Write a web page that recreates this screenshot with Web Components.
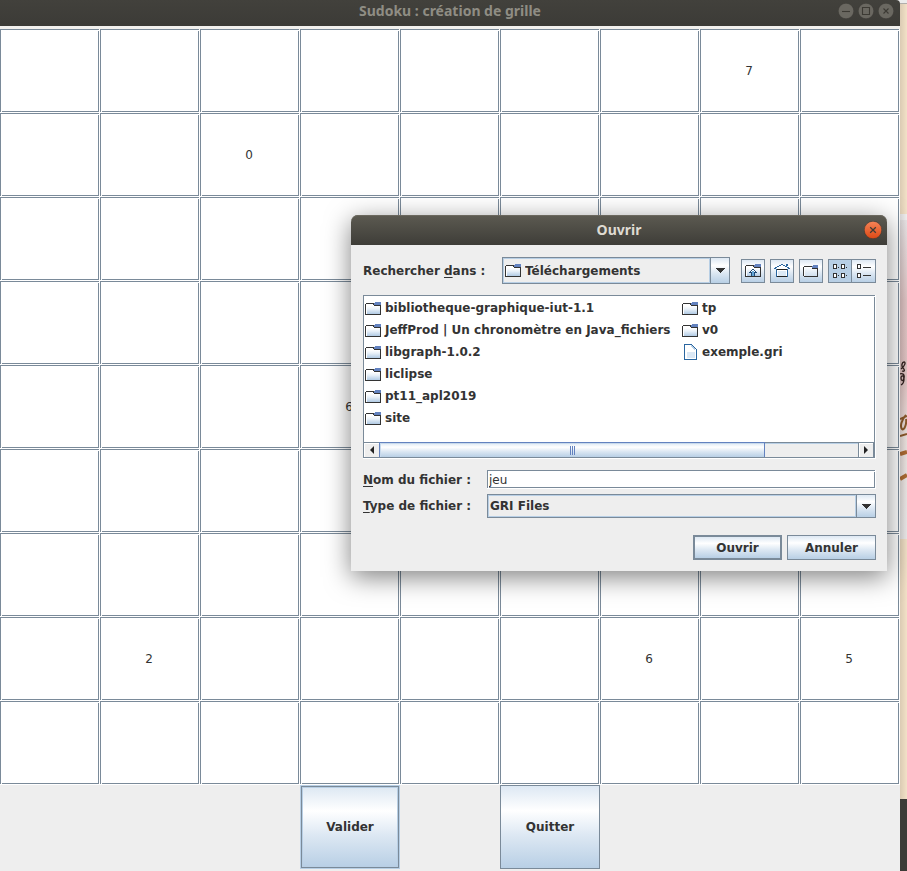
<!DOCTYPE html>
<html lang="fr">
<head>
<meta charset="utf-8">
<title>Sudoku : création de grille</title>
<style>
  html { height: 100%; }
  body {
    margin: 0; min-height: 100vh; display: grid; position: relative;
    font: 12px/16px "DejaVu Sans", sans-serif; color: #333; background: #eee;
    --line: #7a8a99; --focus: #b8cfe5; --face: #eee;
    --metal: linear-gradient(#dde8f3, #fff 30%, #dde8f3 60%, #b8cfe5);
    --etched:
      linear-gradient(#7a8a99, #7a8a99) left 0 top 0 / calc(100% - 1px) 1px no-repeat,
      linear-gradient(#7a8a99, #7a8a99) left 0 top 0 / 1px calc(100% - 1px) no-repeat,
      linear-gradient(#7a8a99, #7a8a99) right 1px top 2px / 1px calc(100% - 3px) no-repeat,
      linear-gradient(#7a8a99, #7a8a99) left 2px bottom 1px / calc(100% - 3px) 1px no-repeat,
      #fff;
  }
</style>
</head>
<body>
<sudoku-desktop>
  <sudoku-window heading="Sudoku : création de grille"></sudoku-window>
  <file-dialog heading="Ouvrir"></file-dialog>
</sudoku-desktop>

<script>
const define = (name, html, setup) => customElements.define(name, class extends HTMLElement {
  constructor() {
    super();
    const t = document.createElement('template');
    t.innerHTML = html;
    this.attachShadow({ mode: 'open' }).append(t.content.cloneNode(true));
  }
  connectedCallback() {
    if (setup && !this.ready) { this.ready = true; setup(this, this.shadowRoot); }
  }
});

const FOLDER = `<defs><linearGradient id="f" x1="0" y1="0" x2="0" y2="1"><stop offset="0" stop-color="#fff"/><stop offset=".4" stop-color="#e8f0f8"/><stop offset="1" stop-color="#b0cae4"/></linearGradient></defs>
  <path fill="#fff" d="M1 2h14v10H1z"/><path fill="url(#f)" d="M2 4h13v8H2z"/>
  <path fill="#333" d="M1 1h8v1H1zM0 2h1v11H0zM1 12h15v1H1zM15 3h1v10h-1zM8 2h1v1H8zM9 3h6v1H9z"/>
  <path fill="#6382bf" d="M10 0h6v3H9V1h1z"/>`;
const ICONS = {
  folder: `<svg width="16" height="13" viewBox="0 0 16 13" shape-rendering="crispEdges">${FOLDER}</svg>`,
  file: `<svg width="16" height="16" viewBox="0 0 16 16" shape-rendering="crispEdges"><path fill="#fff" d="M3 1h7l4 4v10H3z"/><path fill="#dbe8f5" d="M4 8h9v6H4z"/><path fill="#fff" d="M4 2h1v12H4z"/><path fill="#2a66a0" d="M2 0h8v1H2zM2 0h1v16H2zM2 15h13v1H2zM14 5h1v11h-1zM10 1h1v1h-1zM11 2h1v1h-1zM12 3h1v1h-1zM13 4h1v1h-1z"/><path fill="#b8cfe5" d="M9 1h1v2H9zM10 2h1v2h-1zM11 3h1v2h-1zM12 4h1v2h-1z"/></svg>`,
  up: `<svg width="16" height="13" viewBox="0 0 16 13" shape-rendering="crispEdges">${FOLDER}<path fill="#fff" d="M7 6h2v1h1v1h1v1h-1v3H6V9H5V8h1V7h1z"/><path fill="#1f4a75" d="M7 5h2v1H7zM6 6h1v1H6zM9 6h1v1H9zM5 7h1v1H5zM10 7h1v1h-1zM4 8h3v1H4zM9 8h3v1H9zM6 9h1v3H6zM9 9h1v3H9z"/><path fill="#63a5d6" d="M7 7h2v5H7z"/></svg>`,
  home: `<svg width="16" height="14" viewBox="0 0 16 14" shape-rendering="crispEdges"><path fill="#fff" d="M3 3h10v9H3zM5 2h6v1H5zM7 1h2v1H7z"/><path fill="#dce9f5" d="M4 7h8v5H4z"/><path fill="#2a66a0" d="M7 0h2v1H7zM5 1h2v1H5zM9 1h2v1H9zM3 2h2v1H3zM11 2h2v1h-2zM1 3h2v1H1zM13 3h2v1h-2zM0 4h2v1H0zM14 4h2v1h-2zM2 5h1v8H2zM13 5h1v8h-1zM12 0h2v2h-2z"/><path fill="#222" d="M3 5h10v1H3zM3 12h10v1H3z"/></svg>`,
  newFolder: `<svg width="16" height="13" viewBox="0 0 16 13" shape-rendering="crispEdges"><path fill="#fff" d="M1 3h14v1H1zM1 3h1v9H1z" opacity=".8"/><path fill="#333" d="M1 2h8v1H1zM0 3h1v9H0zM1 12h14v1H1zM14 4h1v8h-1zM9 4h6v1H9z"/><path fill="#6382bf" d="M10 1h5v3H9V2h1z"/></svg>`,
  list: `<svg width="16" height="16" viewBox="0 0 16 16" shape-rendering="crispEdges"><path fill="#fff" d="M2 2h2v4H2zM10 2h2v4h-2zM2 11h2v4H2zM10 11h2v4h-2z"/><path fill="none" stroke="#333" d="M1.500 1.500h3v4h-3zM9.500 1.500h3v4h-3zM1.500 10.500h3v4h-3zM9.500 10.500h3v4h-3z"/><path fill="#333" d="M6 4h1v1H6zM14 4h1v1h-1zM6 12h1v1H6zM14 12h1v1h-1z"/></svg>`,
  details: `<svg width="16" height="16" viewBox="0 0 16 16" shape-rendering="crispEdges"><path fill="#fff" d="M2 2h2v4H2zM2 11h2v4H2z"/><path fill="none" stroke="#333" d="M1.500 1.500h3v4h-3zM1.500 10.500h3v4h-3z"/><path fill="#333" d="M7 4h8v1H7zM7 12h8v1H7z"/></svg>`
};

/* Window title bar; "active" selects the lighter colouring. */
define('title-bar', `
<style>
  :host { display: grid; grid-template-columns: 1fr auto 1fr; align-items: center; height: 26px; box-sizing: border-box;
    color: #8f8d84; background: linear-gradient(#42413c, #3c3b37); border-top-right-radius: 4px;
    font: 700 14px/20px "Noto Sans", "Open Sans", sans-serif; padding: 0 6px 4px; }
  :host([active]) { height: 30px; color: #dfdbd2; background: linear-gradient(#5c5a51, #3e3d38); padding: 0 5px;
    border-radius: 7px 7px 0 0; box-shadow: inset 0 1px #6b685e; }
  h1 { font: inherit; margin: 0; grid-column: 2; }
  nav { display: flex; gap: 4px; justify-content: flex-end; }
  button { border: 0; padding: 0; background: none; width: 16px; height: 16px; display: block; }
  :host([active]) button { width: 18px; height: 18px; }
  svg { display: block; width: 100%; height: 100%; }
</style>
<h1><slot></slot></h1><nav></nav>`, (el, root) => {
  const nav = root.querySelector('nav');
  const cross = 'M5.500 5.500l5 5M10.500 5.500l-5 5';
  const all = el.hasAttribute('active') ? [['Fermer', cross]]
    : [['Réduire', 'M4 8.500h8'], ['Agrandir', 'M4.500 4.500h7v7h-7z'], ['Fermer', cross]];
  const fill = el.hasAttribute('active') ? 'url(#g)' : '#6a6861';
  nav.innerHTML = all.map(([n, d]) => `<button aria-label="${n}"><svg viewBox="0 0 16 16">
    <defs><linearGradient id="g" x1="0" y1="0" x2="0" y2="1"><stop offset="0" stop-color="#f58458"/><stop offset="1" stop-color="#dd4814"/></linearGradient></defs>
    <circle cx="8" cy="8" r="7.800" fill="${fill}" stroke="#383632" stroke-width=".5"/>
    <path d="${d}" fill="none" stroke="#3c3a34" stroke-width="1.100"/></svg></button>`).join('');
});

define('metal-button', `
<style>
  :host { display: grid; }
  button { font: 700 12px/16px "DejaVu Sans", sans-serif; color: #333; border: 1px solid var(--line);
    background: var(--metal); padding: 0; margin: 0; display: grid; place-items: center; min-width: 0; }
  :host([default]) button { border-width: 2px; }
  :host([focused]) button { border-color: var(--line); margin: 1px; outline: 1px solid var(--focus); box-shadow: inset 0 0 0 1px var(--focus); }
  :host([pressed]) button { background: var(--focus); }
</style>
<button part="button"><slot></slot></button>`, (el, root) => {
  const b = root.querySelector('button');
  if (el.hasAttribute('label')) b.setAttribute('aria-label', el.getAttribute('label'));
  const icon = el.getAttribute('icon');
  if (icon) b.innerHTML = ICONS[icon];
});

define('sudoku-cell', `
<style>
  :host { display: grid; }
  input { font: 12px/16px "DejaVu Sans", sans-serif; color: #333; text-align: center; border: 0; margin: 0;
    padding: 0 2px 0 0; min-width: 0; width: 100%; box-sizing: border-box; border-radius: 0; background: var(--etched); outline: 0; }
</style>
<input type="text" maxlength="1">`, (el, root) => {
  const i = root.querySelector('input');
  i.value = el.getAttribute('value') || '';
  i.setAttribute('aria-label', el.getAttribute('label'));
});

define('sudoku-window', `
<style>
  :host { display: flex; flex-direction: column; gap: 3px; background: linear-gradient(#f2f1ee, #f2f1ee) 0 26px / 100% 3px no-repeat, var(--face); }
  main { flex: 1; display: grid; grid-template-columns: repeat(9, 1fr); grid-template-rows: repeat(10, 1fr); padding-bottom: 2px; }
  .ok { grid-area: 10 / 4; } .quit { grid-area: 10 / 6; }
</style>
<title-bar></title-bar>
<main></main>`, (el, root) => {
  root.querySelector('title-bar').textContent = el.getAttribute('heading');
  const given = { '1,8': 7, '2,3': 0, '5,4': 6, '8,2': 2, '8,7': 6, '8,9': 5 };
  let html = '';
  for (let r = 1; r < 10; r++) for (let c = 1; c < 10; c++)
    html += `<sudoku-cell label="Ligne ${r}, colonne ${c}" value="${given[r + ',' + c] ?? ''}"></sudoku-cell>`;
  root.querySelector('main').innerHTML = html +
    '<metal-button class="ok" focused>Valider</metal-button><metal-button class="quit">Quitter</metal-button>';
});

define('metal-combo', `
<style>
  :host { display: grid; grid-template-columns: var(--label-width) 1fr; align-items: center; }
  label { font-weight: 700; }
  .box { display: flex; align-items: center; border: 1px solid var(--line); height: 22px; }
  :host([tall]) .box { height: 25px; }
  .value { flex: 1; align-self: stretch; display: flex; align-items: center; gap: 4px; padding: 0 1px; border: 1px solid var(--focus); min-width: 0; }
  .value svg { flex: none; }
  select { appearance: none; flex: 1; min-width: 0; border: 0; padding: 0; margin: 0; background: none; color: #333; outline: 0;
    font: 700 12px/16px "DejaVu Sans", sans-serif; }
  .arrow { width: 18px; align-self: stretch; border-left: 1px solid var(--line); background: var(--metal); display: grid; place-items: center; }
</style>
<label for="s"><slot></slot></label>
<div class="box"><div class="value"><select id="s"></select></div>
<div class="arrow"><svg width="10" height="5" viewBox="0 0 10 5" shape-rendering="crispEdges"><path fill="#333" d="M0 0h10L5 5z"/></svg></div></div>`, (el, root) => {
  const s = root.querySelector('select');
  s.add(new Option(el.getAttribute('value')));
  if (el.hasAttribute('icon')) s.insertAdjacentHTML('beforebegin', ICONS[el.getAttribute('icon')]);
});

define('metal-field', `
<style>
  :host { display: grid; grid-template-columns: var(--label-width) 1fr; align-items: center; }
  label { font-weight: 700; }
  input { font: 12px/16px "DejaVu Sans", sans-serif; color: #333; border: 0; border-radius: 0; height: 19px; box-sizing: border-box;
    padding: 0 2px; margin: 0; min-width: 0; background: var(--etched); outline: 0; }
</style>
<label for="i"><slot></slot></label><input id="i" type="text">`, (el, root) => {
  root.querySelector('input').value = el.getAttribute('value');
});

define('file-item', `
<style>
  :host { display: flex; align-items: center; gap: 4px; height: 22px; padding: 0 2px 0 1px; font-weight: 700; white-space: nowrap; }
</style>
<slot></slot>`, (el, root) => {
  root.querySelector('slot').insertAdjacentHTML('beforebegin', ICONS[el.getAttribute('icon') || 'folder']);
});

define('file-list', `
<style>
  :host { display: block; background: var(--etched); padding: 1px 2px 1px 1px; }
  .view { display: grid; grid-auto-flow: column; grid-template-rows: repeat(6, auto); grid-auto-columns: minmax(317px, max-content);
    align-content: start; min-height: 146px; box-sizing: border-box; padding-top: 1px; overflow: hidden; }
  .bar { display: flex; height: 16px; box-sizing: border-box; border-top: 1px solid var(--line); border-bottom: 1px solid var(--line);
    background: var(--face); box-shadow: inset 0 1px #b8cfe5; }
  button { width: 15px; padding: 0; border: 0; background: var(--face); box-shadow: inset 1px 1px #fff; display: grid; place-items: center; }
  button:last-child { width: 16px; border-left: 1px solid var(--line); border-right: 1px solid var(--line); }
  .thumb { flex: 386; border: solid #6382bf; border-width: 0 1px; margin-top: -1px; border-top-width: 1px; background: var(--metal); box-shadow: inset 1px 1px #c8daec;
    display: flex; gap: 1px; justify-content: center; align-items: center; }
  .thumb i { width: 1px; height: 9px; background: #6382bf; }
  .rest { flex: 93; }
</style>
<div class="view"><slot></slot></div>
<div class="bar"><button aria-label="Défiler à gauche"><svg width="4" height="8"><path fill="#222" d="M4 0v8L0 4z"/></svg></button>
<div class="thumb"><i></i><i></i><i></i></div><div class="rest"></div>
<button aria-label="Défiler à droite"><svg width="4" height="8"><path fill="#222" d="M0 0v8l4-4z"/></svg></button></div>`);

define('file-dialog', `
<style>
  :host { display: block; background: var(--face); border-radius: 7px 7px 0 0; box-shadow: 0 6px 26px rgba(0, 0, 0, .5); }
  form { padding: 12px 11px 11px 12px; }
  .look { display: flex; align-items: center; }
  .look metal-combo { flex: 1; --label-width: 139px; margin-right: 11px; }
  .tools { display: flex; gap: 5px; }
  .tools metal-button { width: 24px; height: 24px; }
  .tools .last { margin-left: -5px; }
  .tools .last::part(button) { border-left-width: 0; }
  file-list, .name { margin-top: 11px; }
  .name, .type { --label-width: 124px; }
  .type { margin-top: 5px; }
  .actions { display: grid; grid-template-columns: 89px 89px; grid-auto-rows: 25px; gap: 5px; justify-content: end; margin-top: 17px; }
  u { text-decoration-thickness: 1px; text-underline-offset: 2px; text-decoration-skip-ink: none; }
</style>
<title-bar active></title-bar>
<form onsubmit="return false">
  <div class="look">
    <metal-combo tall icon="folder" value="Téléchargements">Rechercher <u>d</u>ans :</metal-combo>
    <div class="tools">
      <metal-button icon="up" label="Dossier parent"></metal-button>
      <metal-button icon="home" label="Répertoire d'accueil"></metal-button>
      <metal-button icon="newFolder" label="Nouveau dossier"></metal-button>
      <metal-button icon="list" label="Liste" pressed></metal-button>
      <metal-button icon="details" label="Détails" class="last"></metal-button>
    </div>
  </div>
  <file-list>
    <file-item>bibliotheque-graphique-iut-1.1</file-item>
    <file-item>JeffProd | Un chronomètre en Java_fichiers</file-item>
    <file-item>libgraph-1.0.2</file-item>
    <file-item>liclipse</file-item>
    <file-item>pt11_apl2019</file-item>
    <file-item>site</file-item>
    <file-item>tp</file-item>
    <file-item>v0</file-item>
    <file-item icon="file">exemple.gri</file-item>
  </file-list>
  <metal-field class="name" value="jeu"><u>N</u>om du fichier :</metal-field>
  <metal-combo class="type" value="GRI Files"><u>T</u>ype de fichier :</metal-combo>
  <div class="actions"><metal-button default>Ouvrir</metal-button><metal-button>Annuler</metal-button></div>
</form>`, (el, root) => {
  root.querySelector('title-bar').textContent = el.getAttribute('heading');
});

/* Desktop: the main window, a sliver of wallpaper on its right, and the floating dialog. */
define('sudoku-desktop', `
<style>
  :host { display: grid; grid-template-columns: 1fr 7px; position: relative; overflow: hidden; }
  ::slotted(sudoku-window) { grid-area: 1 / 1; }
  ::slotted(file-dialog) { position: absolute; left: 351px; right: 20px; top: 215px; }
  .wall { grid-area: 1 / 2; overflow: hidden; background: #3c3b37; }
  svg { display: block; }
</style>
<div class="wall"><svg width="7" height="799" viewBox="0 0 7 799">
  <defs>
    <linearGradient id="p" x1="0" y1="0" x2="0" y2="1"><stop offset="0" stop-color="#e9e4e5"/><stop offset=".25" stop-color="#dfc4c4"/><stop offset=".5" stop-color="#e0c3c2"/><stop offset=".68" stop-color="#ece2de"/><stop offset="1" stop-color="#eceaea"/></linearGradient>
    <linearGradient id="s"><stop offset="0" stop-color="#000" stop-opacity=".1"/><stop offset="1" stop-color="#000" stop-opacity="0"/></linearGradient>
  </defs>
  <path fill="#f3e1c7" d="M0 0h7v799H0z"/><path fill="#ececec" d="M0 0h7v3H0z"/><path fill="#b0aeab" d="M0 3h7v1H0z"/>
  <path fill="#f1efef" d="M0 214h7v6H0z"/><path fill="url(#p)" d="M0 220h7v319H0z"/>
  <path d="M1 369c4-3 5-7 3-7s-3 4-1 6 2 4-1 3M0 374c2-1 5 0 4 4s-3 3-3 0 3-3 3 1-1 5-3 6" fill="none" stroke="#33211f" stroke-width="1.300"/>
  <path d="M0 419l7-3M6 415c-5 5-6 12-4 14s5-5 4-10M0 436l7-2" fill="none" stroke="#8d5a2c" stroke-width="2"/>
  <path d="M0 454l7-2M0 479l7-4" fill="none" stroke="#ad6c33" stroke-width="4"/>
  <path fill="url(#s)" d="M0 4h7v795H0z"/>
</svg></div>
<slot></slot>`);
</script>
</body>
</html>
